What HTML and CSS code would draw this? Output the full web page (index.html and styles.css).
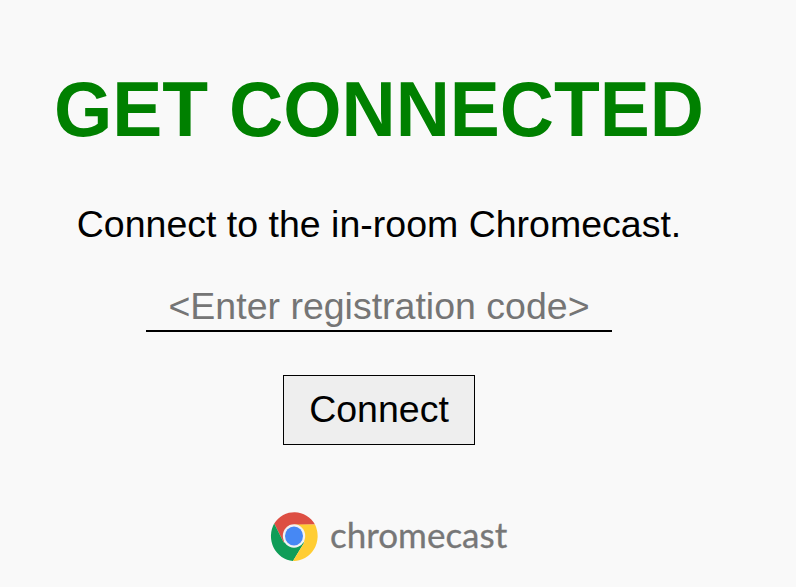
FILE: index.html
```html
<!DOCTYPE html>
<html lang="en">
<head>
<meta charset="utf-8">
<title>Get Connected</title>
<link rel="stylesheet" href="styles.css">
</head>
<body>
<main class="page">
  <h1 class="title">GET CONNECTED</h1>
  <p class="intro">Connect to the in-room Chromecast.</p>
  <input class="code" type="text" placeholder="&lt;Enter registration code&gt;">
  <button class="connect" type="button">Connect</button>
  <div class="brand">
    <svg class="logo" viewBox="0 0 48 50" preserveAspectRatio="none" aria-hidden="true">
      <path fill="#dd4f43" d="M4.2 12.5A24 25 0 0 1 45 13.6L24 14L13.6 31.2Z"/>
      <path fill="#0f9d58" d="M4.2 12.5A24 25 0 0 0 23 50L34.4 31.2L13.6 31.2Z"/>
      <path fill="#ffcd33" d="M45 13.6A24 25 0 0 1 23 50L34.4 31.2L24 13.6Z"/>
      <ellipse cx="24" cy="25" rx="11.2" ry="11.7" fill="#f2f2f2"/>
      <ellipse cx="24" cy="25" rx="9" ry="9.4" fill="#4688f4"/>
    </svg>
    <span class="brand-name">chromecast</span>
  </div>
</main>
</body>
</html>
```

FILE: styles.css
```css
* { box-sizing: border-box; }
body { margin: 0; background: #f9f9f9; color: #000; font-family: "Liberation Sans", Arial, sans-serif; }
.page { width: 758px; height: 587px; overflow: hidden; display: flex; flex-direction: column; align-items: center; }
.title { margin: 65px 0 0; color: #008000; font-size: 75px; line-height: 88px; white-space: nowrap; transform: scaleY(1.04); }
.intro { margin: 49px 0 0; font-size: 37.5px; line-height: 44px; white-space: nowrap; }
.code { width: 466px; height: 52px; margin: 34px 0 0; padding: 2px 0 0; border: 0; border-bottom: 2px solid #000; background: transparent; color: #000; font: 37.5px "Liberation Sans", Arial, sans-serif; text-align: center; outline: 0; }
.code::placeholder { color: #757575; opacity: 1; }
.connect { width: 192px; height: 70px; margin: 43px 0 0; padding: 0 0 2px; border: 1px solid #000; border-radius: 0; background: #eee; color: #000; font: 37.5px "Liberation Sans", Arial, sans-serif; }
.brand { display: flex; align-items: center; align-self: flex-start; margin: 66px 0 0 270px; height: 50px; }
.logo { width: 48px; height: 50px; }
.brand-name { margin: -5px 0 0 12px; color: #777; font: 400 35px/40px Lato, sans-serif; -webkit-text-stroke: 0.3px #777; }
```
